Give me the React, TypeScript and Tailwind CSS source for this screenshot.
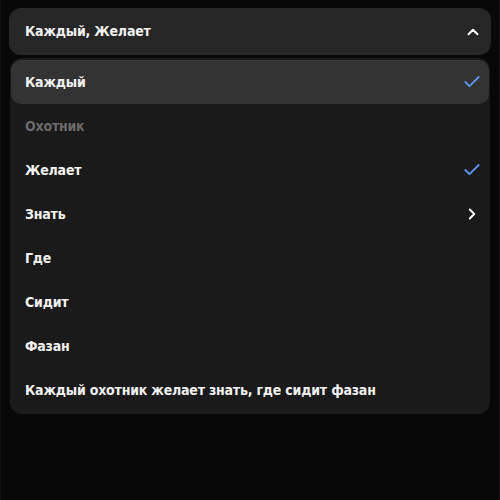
import { Check, ChevronRight, ChevronUp } from "lucide-react";

type Item = {
  label: string;
  selected?: boolean;
  active?: boolean;
  disabled?: boolean;
  submenu?: boolean;
};

const items: Item[] = [
  { label: "Каждый", selected: true, active: true },
  { label: "Охотник", disabled: true },
  { label: "Желает", selected: true },
  { label: "Знать", submenu: true },
  { label: "Где" },
  { label: "Сидит" },
  { label: "Фазан" },
  { label: "Каждый охотник желает знать, где сидит фазан" },
];

export default function App() {
  return (
    <div className="h-[500px] w-[500px] border-x border-[#121212] bg-[#080808] px-[8px] pt-[8px] font-['DejaVu_Sans_Condensed','DejaVu_Sans',sans-serif] text-[14px] font-bold tracking-[-0.2px] text-[#f2f2f2]">
      <button className="flex h-[47px] w-full items-center justify-between rounded-[12px] bg-[#262626] pl-[16px] pr-[9px] font-bold">
        <span>Каждый, Желает</span>
        <ChevronUp size={18} strokeWidth={2.5} className="text-white" />
      </button>

      <div className="mx-[1px] mt-[3px] rounded-[12px] bg-[#1a1a1a] px-[1px] py-[2px]">
        {items.map((item) => (
          <div
            key={item.label}
            className={`flex h-[44px] items-center justify-between rounded-[10px] pl-[14px] pr-[7px] ${
              item.active ? "bg-[#333333]" : ""
            } ${item.disabled ? "text-[#6b6b6b]" : ""}`}
          >
            <span>{item.label}</span>
            {item.selected && <Check size={20} strokeWidth={2.25} className="text-[#5b93f5]" />}
            {item.submenu && <ChevronRight size={18} strokeWidth={2.5} className="mr-[1px] text-white" />}
          </div>
        ))}
      </div>
    </div>
  );
}
